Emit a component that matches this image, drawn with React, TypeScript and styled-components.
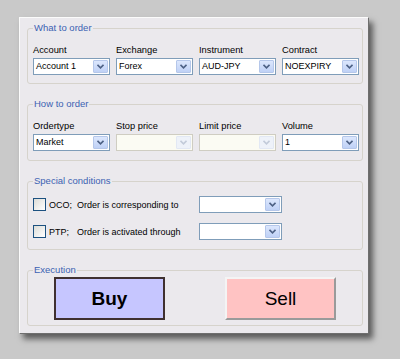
import React from 'react'
import styled, { createGlobalStyle } from 'styled-components'

const GlobalStyle = createGlobalStyle`
    html, body {
        margin: 0;
        padding: 0;
        background-color: #c9c9c9;
    }
    body {
        font-family: "Liberation Sans", Arial, sans-serif;
        font-size: 9.3px;
        color: #000;
    }
`

const Page = styled.div`
    width: 400px;
    height: 359px;
    padding: 17px 0 0 19px;
    box-sizing: border-box;
    overflow: hidden;
`

const Window = styled.div`
    width: 350px;
    box-sizing: border-box;
    background-color: #ebe9ed;
    border: 1px solid;
    border-color: #fbfbfb #6e6e6e #6e6e6e #fbfbfb;
    box-shadow: 4px 5px 6px rgba(0, 0, 0, 0.55);
    padding: 4px 5px 7px 7px;
    display: flex;
    flex-direction: column;
    gap: 14px;
`

const Group = styled.fieldset<{ $pad: string }>`
    margin: 0;
    min-width: 0;
    width: 336px;
    box-sizing: border-box;
    border: 1px solid #d6d3cc;
    border-radius: 3px;
    padding: ${({ $pad }) => $pad};
`

const Legend = styled.legend<{ $inset?: number }>`
    padding: 0 1px;
    margin-left: ${({ $inset }) => $inset ?? 0}px;
    font-size: 9.5px;
    line-height: 12px;
    color: #3c62b2;
`

const FieldGrid = styled.div`
    display: grid;
    grid-template-columns: repeat(4, 77px);
    column-gap: 6px;
`

const Field = styled.div`
    display: flex;
    flex-direction: column;
    gap: 2px;
`

const Label = styled.span`
    line-height: 12px;
    white-space: nowrap;
`

const ComboBox = styled.div<{ $disabled?: boolean; $width: number }>`
    width: ${({ $width }) => $width}px;
    height: 17px;
    box-sizing: border-box;
    display: flex;
    align-items: stretch;
    background-color: ${({ $disabled }) => ($disabled ? '#fbfbf3' : '#ffffff')};
    border: 1px solid ${({ $disabled }) => ($disabled ? '#cfcdc2' : '#7f9db9')};
`

const ComboText = styled.span`
    flex: 1;
    padding-left: 2px;
    font-size: 9px;
    line-height: 15px;
    white-space: nowrap;
    overflow: hidden;
`

const ComboButton = styled.span<{ $disabled?: boolean }>`
    width: 15px;
    margin: 1px;
    box-sizing: border-box;
    border: 1px solid ${({ $disabled }) => ($disabled ? '#e2e8f4' : '#b5c7ea')};
    border-radius: 1px;
    background: ${({ $disabled }) =>
        $disabled ? '#eef2f9' : 'linear-gradient(#dce7fd, #bfd1f6)'};
    display: flex;
    align-items: center;
    justify-content: center;
`

const Combo: React.FC<{ value?: string; disabled?: boolean; width?: number }> = ({
    value = '',
    disabled,
    width = 77,
}) => (
    <ComboBox $disabled={disabled} $width={width}>
        <ComboText>{value}</ComboText>
        <ComboButton $disabled={disabled}>
            <svg width="7" height="5" viewBox="0 0 7 5">
                <path
                    d="M0.5 0.8 L3.5 3.8 L6.5 0.8"
                    fill="none"
                    stroke={disabled ? '#c3cbd9' : '#4d6185'}
                    strokeWidth="1.6"
                />
            </svg>
        </ComboButton>
    </ComboBox>
)

const CondList = styled.div`
    display: flex;
    flex-direction: column;
    gap: 10px;
`

const CondRow = styled.div`
    display: grid;
    grid-template-columns: 13px 31px 122px 83px;
    align-items: center;
    height: 17px;
    font-size: 9px;
`

const CheckBox = styled.span`
    width: 13px;
    height: 13px;
    box-sizing: border-box;
    border: 1px solid #1c5180;
    background: linear-gradient(135deg, #dcdcd7, #ffffff);
`

const CondTag = styled.span`
    padding-left: 3px;
    line-height: 12px;
`

const CondText = styled.span`
    line-height: 12px;
    white-space: nowrap;
`

const ButtonRow = styled.div`
    display: flex;
    justify-content: space-between;
    padding: 0 26px;
`

const TradeButton = styled.button<{ $side: 'buy' | 'sell' }>`
    width: 111px;
    height: 43px;
    box-sizing: border-box;
    margin: 0;
    padding: 0;
    font-family: Arial, "Liberation Sans", sans-serif;
    font-size: 19px;
    color: #000;
    background-color: ${({ $side }) => ($side === 'buy' ? '#c6c6ff' : '#ffc3c3')};
    font-weight: ${({ $side }) => ($side === 'buy' ? 700 : 400)};
    border: 2px solid;
    border-color: ${({ $side }) =>
        $side === 'buy' ? '#3f3030' : '#f4f4f4 #9a9a9a #9a9a9a #f4f4f4'};
`

const App: React.FC = () => {
    return (
        <Page>
            <GlobalStyle />
            <Window>
                <Group $pad="10px 3px 8px 5px">
                    <Legend>What to order</Legend>
                    <FieldGrid>
                        <Field>
                            <Label>Account</Label>
                            <Combo value="Account 1" />
                        </Field>
                        <Field>
                            <Label>Exchange</Label>
                            <Combo value="Forex" />
                        </Field>
                        <Field>
                            <Label>Instrument</Label>
                            <Combo value="AUD-JPY" />
                        </Field>
                        <Field>
                            <Label>Contract</Label>
                            <Combo value="NOEXPIRY" />
                        </Field>
                    </FieldGrid>
                </Group>

                <Group $pad="10px 3px 9px 5px">
                    <Legend>How to order</Legend>
                    <FieldGrid>
                        <Field>
                            <Label>Ordertype</Label>
                            <Combo value="Market" />
                        </Field>
                        <Field>
                            <Label>Stop price</Label>
                            <Combo disabled />
                        </Field>
                        <Field>
                            <Label>Limit price</Label>
                            <Combo disabled />
                        </Field>
                        <Field>
                            <Label>Volume</Label>
                            <Combo value="1" />
                        </Field>
                    </FieldGrid>
                </Group>

                <Group $pad="9px 3px 9px 5px">
                    <Legend>Special conditions</Legend>
                    <CondList>
                        <CondRow>
                            <CheckBox />
                            <CondTag>OCO;</CondTag>
                            <CondText>Order is corresponding to</CondText>
                            <Combo width={83} />
                        </CondRow>
                        <CondRow>
                            <CheckBox />
                            <CondTag>PTP;</CondTag>
                            <CondText>Order is activated through</CondText>
                            <Combo width={83} />
                        </CondRow>
                    </CondList>
                </Group>

                <Group $pad="1px 0 5px 0">
                    <Legend $inset={5}>Execution</Legend>
                    <ButtonRow>
                        <TradeButton $side="buy">Buy</TradeButton>
                        <TradeButton $side="sell">Sell</TradeButton>
                    </ButtonRow>
                </Group>
            </Window>
        </Page>
    )
}

export default App
